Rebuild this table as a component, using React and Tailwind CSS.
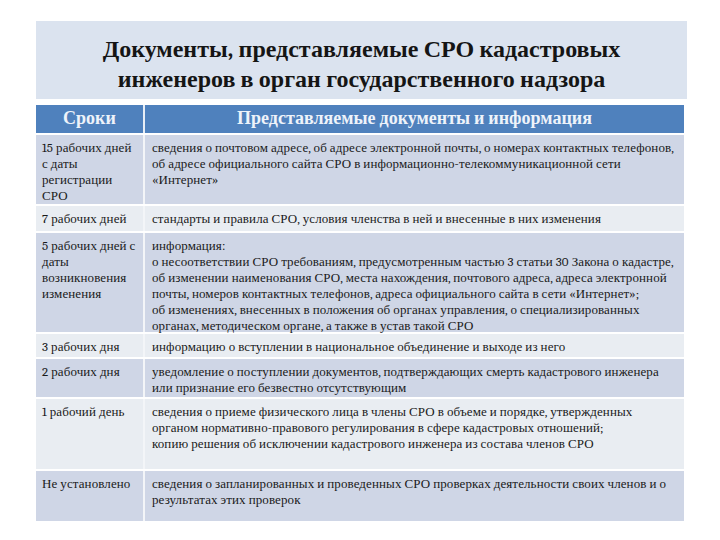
import React from "react";

const rows = [
  {
    h: "h-[69px]",
    bg: "bg-[#cfd6e6]",
    a: ["15 рабочих дней", "с даты", "регистрации", "СРО"],
    b: [
      "сведения о почтовом адресе, об адресе электронной почты, о номерах контактных телефонов,",
      "об адресе официального сайта СРО в информационно-телекоммуникационной сети",
      "«Интернет»",
    ],
  },
  {
    h: "h-[25px]",
    bg: "bg-[#e9edf2]",
    a: ["7 рабочих дней"],
    b: ["стандарты и правила СРО, условия членства в ней и внесенные в них изменения"],
  },
  {
    h: "h-[99px]",
    bg: "bg-[#cfd6e6]",
    a: ["5 рабочих дней с", "даты", "возникновения", "изменения"],
    b: [
      "информация:",
      "о несоответствии СРО требованиям, предусмотренным частью 3 статьи 30 Закона о кадастре,",
      "об изменении наименования СРО, места нахождения, почтового адреса, адреса электронной",
      "почты, номеров контактных телефонов, адреса официального сайта в сети «Интернет»;",
      "об изменениях, внесенных в положения об органах управления, о специализированных",
      "органах, методическом органе, а также в устав такой СРО",
    ],
  },
  {
    h: "h-[23px]",
    bg: "bg-[#e9edf2]",
    a: ["3 рабочих дня"],
    b: ["информацию о вступлении в национальное объединение и выходе из него"],
  },
  {
    h: "h-[38px]",
    bg: "bg-[#cfd6e6]",
    a: ["2 рабочих дня"],
    b: [
      "уведомление о поступлении документов, подтверждающих смерть кадастрового инженера",
      "или признание его безвестно отсутствующим",
    ],
  },
  {
    h: "h-[70px]",
    bg: "bg-[#e9edf2]",
    a: ["1 рабочий день"],
    b: [
      "сведения о приеме физического лица в члены СРО в объеме и порядке, утвержденных",
      "органом нормативно-правового регулирования в сфере кадастровых отношений;",
      "копию решения об исключении кадастрового инженера из состава членов СРО",
    ],
  },
  {
    h: "h-[50px]",
    bg: "bg-[#cfd6e6]",
    a: ["Не установлено"],
    b: [
      "сведения о запланированных и проведенных СРО проверках деятельности своих членов и о",
      "результатах этих проверок",
    ],
  },
];

export default function App() {
  return (
    <div className="w-[720px] h-[540px] bg-white overflow-hidden font-serif">
      <div className="pt-[21px] pl-[36px]">
        <div className="w-[651px] h-[78px] pt-[8px] bg-[#dbe3ef] flex flex-col items-center justify-center text-[#151515]">
          <div className="font-serif font-bold text-[24px] leading-[30px]">Документы, представляемые СРО кадастровых</div>
          <div className="font-serif font-bold text-[24px] leading-[30px]">инженеров в орган государственного надзора</div>
        </div>
        <div className="mt-[6px] w-[648px] flex flex-col gap-[2px]">
          <div className="h-[28px] flex bg-[#4f81bd] text-[#eef3fa]">
            <div className="w-[107px] text-center font-serif font-bold text-[18px] leading-[28px]">Сроки</div>
            <div className="w-[2px] bg-[#e8eef6]" />
            <div className="flex-1 text-center font-serif font-bold text-[18px] leading-[28px]">Представляемые документы и информация</div>
          </div>
          {rows.map((r, i) => (
            <div key={i} className={`flex ${r.h} ${r.bg} text-[#1a1a1a]`}>
              <div className="w-[107px] pl-[6px] pt-[5px]">
                {r.a.map((t, j) => (
                  <div key={j} className="whitespace-nowrap font-serif text-[13px] leading-[16px] tracking-[0.1px]">{t}</div>
                ))}
              </div>
              <div className="w-[2px] bg-[#f3f5f8]" />
              <div className="flex-1 pl-[7px] pt-[5px]">
                {r.b.map((t, j) => (
                  <div key={j} className="whitespace-nowrap font-serif text-[13px] leading-[16px] tracking-[0.1px]">{t}</div>
                ))}
              </div>
            </div>
          ))}
        </div>
      </div>
    </div>
  );
}
